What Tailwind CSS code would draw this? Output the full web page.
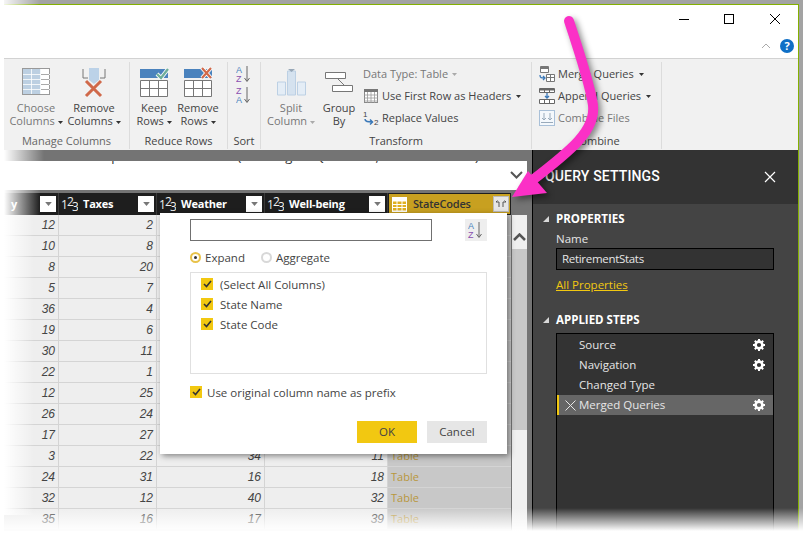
<!DOCTYPE html>
<html lang="en">
<head>
  <meta charset="UTF-8" />
  <title>Query Editor - Expand column</title>
  <script src="https://cdn.jsdelivr.net/npm/@tailwindcss/browser@4"></script>
</head>
<body class="bg-white">
<div class="relative w-[803px] h-[534px] overflow-hidden bg-[#a3a3a3] [font-family:'Open_Sans',sans-serif] text-[11px] text-[#444]">

  <svg class="hidden">
    <symbol id="gear" viewBox="0 0 12 12">
      <circle cx="6" cy="6" r="3.4" fill="none" stroke="#fff" stroke-width="2.6"/>
      <path d="M6 0v12M0 6h12M1.8 1.8l8.4 8.4M10.2 1.8l-8.4 8.4" stroke="#fff" stroke-width="2" stroke-dasharray="2.2 7.6 2.2"/>
    </symbol>
    <symbol id="drop" viewBox="0 0 5 3"><path d="M0 0h5L2.5 3z" fill="currentColor"/></symbol>
  </svg>

  <!-- window -->
  <div class="absolute left-[4px] top-[4px] w-[795px] h-[530px] bg-white border-t border-r border-[#84b000] flex flex-col">

    <!-- title + tabs area -->
    <div class="h-[53px] shrink-0 flex flex-col items-end">
      <div class="flex items-center h-[28px] text-black">
        <svg class="w-[12px] h-[12px] mr-[33px]" viewBox="0 0 12 12"><path d="M1 6.5h10" stroke="#000"/></svg>
        <svg class="w-[12px] h-[12px] mr-[34px]" viewBox="0 0 12 12"><rect x="1.5" y="1.5" width="9" height="9" fill="none" stroke="#000"/></svg>
        <svg class="w-[12px] h-[12px] mr-[17px]" viewBox="0 0 12 12"><path d="M1 1l10 10M11 1L1 11" stroke="#000"/></svg>
      </div>
      <div class="flex items-center mr-[4px] mt-[6px]">
        <svg class="w-[10px] h-[6px] mr-[9px]" viewBox="0 0 10 6"><path d="M1 5l4-4 4 4" fill="none" stroke="#aaa"/></svg>
        <div class="w-[14px] h-[14px] rounded-full bg-[#0f6fc6] text-white text-[11px] font-bold leading-[14px] text-center">?</div>
      </div>
    </div>

    <!-- ribbon -->
    <div class="h-[92px] shrink-0 bg-[#f1f1f1] border-t border-[#d2d2d2] flex pt-[3px] pb-[1px]">

      <div class="w-[126px] border-r border-[#dcdcdc] flex flex-col">
        <div class="flex-1 flex pl-[3px]">
          <div class="w-[58px] flex flex-col items-center text-[#777]">
            <svg class="w-[29px] h-[28px] mt-[6px] mb-[5px]" viewBox="0 0 29 28">
              <rect x=".5" y=".5" width="27" height="26" fill="#fff" stroke="#999"/>
              <rect x="1" y="1" width="18" height="25" fill="#bdd0e2"/>
              <path d="M1 6.5h27M1 11.5h27M1 16.5h27M1 21.5h27M9.5 1v25M18.5 1v25" stroke="#fff" stroke-opacity=".8"/>
              <path d="M19 6.5h8M19 11.5h8M19 16.5h8M19 21.5h8" stroke="#aaa"/>
            </svg>
            <div class="leading-[13px] text-center">Choose<br>Columns <svg class="inline w-[5px] h-[3px] align-middle text-[#333]"><use href="#drop"/></svg></div>
          </div>
          <div class="w-[58px] flex flex-col items-center">
            <svg class="w-[24px] h-[30px] mt-[6px] mb-[3px]" viewBox="0 0 24 30">
              <path d="M1 1v9h5M23 1v9h-5" fill="none" stroke="#777"/>
              <path d="M7 0h10v12l-5 4-5-4z" fill="#bcd2e8"/>
              <path d="M4 13l15 15M19 13L4 28" stroke="#d0694a" stroke-width="3"/>
            </svg>
            <div class="leading-[13px] text-center">Remove<br>Columns <svg class="inline w-[5px] h-[3px] align-middle text-[#333]"><use href="#drop"/></svg></div>
          </div>
        </div>
        <div class="h-[19px] text-center leading-[22px] text-[#666]">Manage Columns</div>
      </div>

      <div class="w-[98px] border-r border-[#dcdcdc] flex flex-col">
        <div class="flex-1 flex pl-[2px]">
          <div class="w-[44px] flex flex-col items-center">
            <svg class="w-[29px] h-[30px] mt-[5px] mb-[4px]" viewBox="0 0 29 30">
              <rect x="0" y="2" width="28" height="9" fill="#4a82bd"/>
              <path d="M17 7l4 4 7-9" fill="none" stroke="#fff" stroke-width="4"/>
              <path d="M17 7l4 4 7-9" fill="none" stroke="#6fae9a" stroke-width="2.4"/>
              <path d="M.5 13.5h27v16H.5zM.5 21.5h27M9.5 13v17M18.5 13v17" fill="#fff" stroke="#777"/>
            </svg>
            <div class="leading-[13px] text-center">Keep<br>Rows <svg class="inline w-[5px] h-[3px] align-middle text-[#333]"><use href="#drop"/></svg></div>
          </div>
          <div class="w-[44px] flex flex-col items-center">
            <svg class="w-[29px] h-[30px] mt-[5px] mb-[4px]" viewBox="0 0 29 30">
              <rect x="0" y="2" width="28" height="9" fill="#4a82bd"/>
              <path d="M18 1l9 10M27 1l-9 10" stroke="#fff" stroke-width="4"/>
              <path d="M18 1l9 10M27 1l-9 10" stroke="#d0694a" stroke-width="2.2"/>
              <path d="M.5 13.5h27v16H.5zM.5 21.5h27M9.5 13v17M18.5 13v17" fill="#fff" stroke="#777"/>
            </svg>
            <div class="leading-[13px] text-center">Remove<br>Rows <svg class="inline w-[5px] h-[3px] align-middle text-[#333]"><use href="#drop"/></svg></div>
          </div>
        </div>
        <div class="h-[19px] text-center leading-[22px]">Reduce Rows</div>
      </div>

      <div class="w-[33px] border-r border-[#dcdcdc] flex flex-col">
        <div class="flex-1 flex flex-col items-center pt-[3px] gap-[3px]">
          <svg class="w-[16px] h-[18px]" viewBox="0 0 16 18">
            <text x="0" y="8" font-size="9" fill="#4a82bd" font-family="Liberation Sans">A</text>
            <text x="0" y="17" font-size="9" fill="#8a4fb0" font-family="Liberation Sans">Z</text>
            <path d="M11 1v15M8.5 13l2.5 3.5 2.5-3.500" fill="none" stroke="#666"/>
          </svg>
          <svg class="w-[16px] h-[18px]" viewBox="0 0 16 18">
            <text x="0" y="8" font-size="9" fill="#8a4fb0" font-family="Liberation Sans">Z</text>
            <text x="0" y="17" font-size="9" fill="#4a82bd" font-family="Liberation Sans">A</text>
            <path d="M11 1v15M8.5 13l2.5 3.5 2.5-3.500" fill="none" stroke="#666"/>
          </svg>
        </div>
        <div class="h-[19px] text-center leading-[22px]">Sort</div>
      </div>

      <div class="w-[271px] border-r border-[#dcdcdc] flex flex-col">
        <div class="flex-1 flex pl-[3px]">
          <div class="w-[54px] flex flex-col items-center text-[#777]">
            <svg class="w-[29px] h-[28px] mt-[6px] mb-[5px]" viewBox="0 0 29 28">
              <path d="M.5 14h8v13h-8zM20.5 14h8v13h-8z" fill="#e4edf6" stroke="#bcd0e4"/>
              <path d="M10.5 3h8v24h-8z" fill="#d5e2ef" stroke="#bcd0e4"/>
              <path d="M11 1h7l-3.500 3z" fill="#98a8b8"/>
            </svg>
            <div class="leading-[13px] text-center">Split<br>Column <svg class="inline w-[5px] h-[3px] align-middle text-[#aaa]"><use href="#drop"/></svg></div>
          </div>
          <div class="w-[42px] flex flex-col items-center">
            <svg class="w-[29px] h-[28px] mt-[6px] mb-[5px]" viewBox="0 0 29 28">
              <path d="M.5 4.500h20v6H.5zM7.500 17.500h20v6h-20z" fill="#fff" stroke="#777"/>
              <path d="M13 11l6 6" stroke="#777"/>
            </svg>
            <div class="leading-[13px] text-center">Group<br>By</div>
          </div>
          <div class="flex flex-col pl-[3px] pt-[3px] gap-[4px]">
            <div class="h-[18px] flex items-center text-[#777]">Data Type: Table <svg class="inline w-[5px] h-[3px] ml-[4px] text-[#aaa]"><use href="#drop"/></svg></div>
            <div class="h-[18px] flex items-center">
              <svg class="w-[14px] h-[14px] mr-[4px] ml-[1px]" viewBox="0 0 14 14">
                <rect x=".5" y=".5" width="13" height="13" fill="#fff" stroke="#888"/>
                <rect x="0" y="0" width="14" height="3" fill="#777"/>
                <path d="M0 6h14M0 9h14M0 12h14M3.500 3v11M7 3v11M10.500 3v11" stroke="#999" stroke-width=".8"/>
              </svg>
              Use First Row as Headers <svg class="inline w-[5px] h-[3px] ml-[5px] text-[#333]"><use href="#drop"/></svg>
            </div>
            <div class="h-[18px] flex items-center">
              <svg class="w-[17px] h-[18px] mr-[2px]" viewBox="0 0 17 18">
                <text x="0" y="8" font-size="8" fill="#444" font-family="Liberation Sans">1</text>
                <text x="11" y="16" font-size="8" fill="#444" font-family="Liberation Sans">2</text>
                <path d="M2 10c0 3 3 3 7 3M7 10.500l2.500 2.500L7 15.500" fill="none" stroke="#3a78b8" stroke-width="1.500"/>
              </svg>
              Replace Values
            </div>
          </div>
        </div>
        <div class="h-[19px] text-center leading-[22px]">Transform</div>
      </div>

      <div class="w-[130px] border-r border-[#dcdcdc] flex flex-col">
        <div class="flex-1 flex flex-col pl-[7px] pt-[3px] gap-[4px]">
          <div class="h-[18px] flex items-center">
            <svg class="w-[16px] h-[16px] mr-[3px]" viewBox="0 0 16 16">
              <path d="M1.500 .5h8v6h-8z" fill="#fff" stroke="#777"/><path d="M1 1h9v2H1z" fill="#777"/>
              <path d="M7.500 8.500h8v7h-8zM7.500 11.500h8M11.500 9v7" fill="#fff" stroke="#777"/>
              <path d="M1 9c0 3 1 3 5 3M4 10l2 2-2 2" fill="none" stroke="#3a78b8" stroke-width="1.300"/>
            </svg>
            Merge Queries <svg class="inline w-[5px] h-[3px] ml-[5px] text-[#333]"><use href="#drop"/></svg>
          </div>
          <div class="h-[18px] flex items-center">
            <svg class="w-[16px] h-[16px] mr-[3px]" viewBox="0 0 16 16">
              <path d="M.5 .5h15v4H.5zM5.500 1v4M10.500 1v4M.5 11.500h15v4H.5zM5.500 11v5M10.500 11v5" fill="#fff" stroke="#666"/>
              <path d="M1 1h14v1.500H1z" fill="#666"/>
              <path d="M8 5v5M6 8l2 2 2-2" fill="none" stroke="#3a78b8" stroke-width="1.300"/>
            </svg>
            Append Queries <svg class="inline w-[5px] h-[3px] ml-[5px] text-[#333]"><use href="#drop"/></svg>
          </div>
          <div class="h-[18px] flex items-center text-[#777]">
            <svg class="w-[16px] h-[16px] mr-[3px]" viewBox="0 0 16 16">
              <rect x=".5" y=".5" width="15" height="15" fill="#f4f8fc" stroke="#a9c0d8"/>
              <path d="M5 3v7M3 8l2 2 2-2M11 3v7M9 8l2 2 2-2M2 12.500h12" fill="none" stroke="#9ab"/>
            </svg>
            Combine Files
          </div>
        </div>
        <div class="h-[19px] text-center leading-[22px]">Combine</div>
      </div>
    </div>

    <!-- body -->
    <div class="flex-1 flex min-h-0 bg-[#747474]">
      <div class="w-[529px] shrink-0 flex flex-col pr-[5px] pt-[11px] border-r border-black">
        <!-- formula bar -->
        <div class="h-[29px] shrink-0 bg-white relative overflow-hidden">
          <div class="absolute left-[36px] top-[-14px] text-[13px] text-[#333] tracking-[1px] whitespace-nowrap">= Table.ExpandTableColumn(#"Merged Queries", "StateCodes")</div>
          <svg class="absolute right-[4px] top-[10px] w-[13px] h-[8px]" viewBox="0 0 13 8"><path d="M1 1l5.500 5.500L12 1" fill="none" stroke="#555" stroke-width="2"/></svg>
        </div>
        <div class="flex flex-1 min-h-0 mt-[3px]">
          <div id="grid" class="w-[507px] shrink-0 [font-family:'Liberation_Sans',sans-serif]"></div>
          <!-- scrollbar -->
          <div class="w-[15px] ml-[1px] mt-[22px] bg-[#f0f0f0] flex flex-col items-center">
            <svg class="w-[13px] h-[8px] mt-[18px] mb-[8px]" viewBox="0 0 13 8"><path d="M1 7l5.500-5.500L12 7" fill="none" stroke="#555" stroke-width="2.500"/></svg>
            <div class="w-[15px] h-[181px] bg-[#c8c8c8]"></div>
          </div>
        </div>
      </div>

      <!-- query settings -->
      <div class="flex-1 bg-[#444] text-[#e6e6e6] text-[11.5px] flex flex-col">
        <div class="h-[54px] shrink-0 bg-[#333] flex items-center justify-between pl-[12px] pr-[22px]">
          <div class="text-white text-[14px] font-medium tracking-[.15px] [font-family:Roboto,sans-serif] pb-[2px]">QUERY SETTINGS</div>
          <svg class="w-[12px] h-[12px]" viewBox="0 0 12 12"><path d="M1 1l10 10M11 1L1 11" stroke="#fff" stroke-width="1.200"/></svg>
        </div>
        <div class="flex flex-col pl-[10px] pr-[24px] flex-1 min-h-0">
          <div class="flex items-center h-[18px] mt-[6px] text-white font-bold">
            <svg class="w-[6px] h-[6px] mr-[7px]" viewBox="0 0 6 6"><path d="M6 0v6H0z" fill="#d8d8d8"/></svg>PROPERTIES
          </div>
          <div class="ml-[13px] mt-[2px] leading-[17px]">Name</div>
          <div class="ml-[13px] mt-[1px] h-[22px] bg-[#333] border border-black px-[5px] leading-[20px] tracking-[-.3px]">RetirementStats</div>
          <div class="ml-[13px] mt-[6px] text-[#f2c811] underline leading-[17px]">All Properties</div>
          <div class="flex items-center h-[18px] mt-[18px] text-white font-bold">
            <svg class="w-[6px] h-[6px] mr-[7px]" viewBox="0 0 6 6"><path d="M6 0v6H0z" fill="#d8d8d8"/></svg>APPLIED STEPS
          </div>
          <div class="ml-[13px] mt-[4px] flex-1 bg-[#333] border border-black pt-[1px]">
            <div class="h-[20px] flex items-center justify-between pl-[22px] pr-[8px]">Source <svg class="w-[12px] h-[12px]"><use href="#gear"/></svg></div>
            <div class="h-[20px] flex items-center justify-between pl-[22px] pr-[8px]">Navigation <svg class="w-[12px] h-[12px]"><use href="#gear"/></svg></div>
            <div class="h-[20px] flex items-center pl-[22px] pr-[8px]">Changed Type</div>
            <div class="h-[20px] flex items-center justify-between bg-[#666] border-l-2 border-[#f2c811] pl-[6px] pr-[8px]">
              <span class="flex items-center">
                <svg class="w-[11px] h-[11px] mr-[3px]" viewBox="0 0 11 11"><path d="M.5.500l10 10M10.500.500l-10 10" stroke="#e6e6e6"/></svg>Merged Queries
              </span>
              <svg class="w-[12px] h-[12px]"><use href="#gear"/></svg>
            </div>
          </div>
        </div>
      </div>
    </div>
  </div>

  <!-- expand dialog -->
  <div class="absolute left-[160px] top-[213px] w-[347px] h-[241px] bg-white shadow-[2px_2px_6px_rgba(0,0,0,0.45)] text-[11.5px] text-[#444] pt-[6px] pl-[30px] pr-[20px]">
    <div class="flex justify-between">
      <div class="w-[242px] h-[22px] border border-[#707070]"></div>
      <div class="w-[22px] h-[22px] bg-[#eee] flex items-center justify-center">
        <svg class="w-[16px] h-[18px]" viewBox="0 0 16 18">
          <text x="0" y="8" font-size="9" fill="#4a82bd" font-family="Liberation Sans">A</text>
          <text x="0" y="17" font-size="9" fill="#8a4fb0" font-family="Liberation Sans">Z</text>
          <path d="M11 1v15M8.500 13l2.500 3.500 2.500-3.500" fill="none" stroke="#666"/>
        </svg>
      </div>
    </div>
    <div class="flex items-center h-[17px] mt-[8px]">
      <span class="w-[11px] h-[11px] rounded-full border-2 border-[#e8c24a] flex items-center justify-center mr-[4px]"><span class="w-[3px] h-[3px] rounded-full bg-[#333]"></span></span>
      <span class="mr-[16px]">Expand</span>
      <span class="w-[11px] h-[11px] rounded-full border-2 border-[#d8d8d8] mr-[4px]"></span>
      <span>Aggregate</span>
    </div>
    <div class="h-[102px] mt-[6px] border border-[#e0e0e0] pl-[10px] pt-[5px] flex flex-col gap-[8px]">
      <label class="flex items-center h-[12px] gap-[7px]"><span class="w-[12px] h-[12px] bg-[#f2c811] flex items-center justify-center"><svg class="w-[9px] h-[8px]" viewBox="0 0 9 8"><path d="M1 4l2.500 2.500L8 1" fill="none" stroke="#333" stroke-width="1.600"/></svg></span><span class="pt-[2px]">(Select All Columns)</span></label>
      <label class="flex items-center h-[12px] gap-[7px]"><span class="w-[12px] h-[12px] bg-[#f2c811] flex items-center justify-center"><svg class="w-[9px] h-[8px]" viewBox="0 0 9 8"><path d="M1 4l2.500 2.500L8 1" fill="none" stroke="#333" stroke-width="1.600"/></svg></span><span class="pt-[2px]">State Name</span></label>
      <label class="flex items-center h-[12px] gap-[7px]"><span class="w-[12px] h-[12px] bg-[#f2c811] flex items-center justify-center"><svg class="w-[9px] h-[8px]" viewBox="0 0 9 8"><path d="M1 4l2.500 2.500L8 1" fill="none" stroke="#333" stroke-width="1.600"/></svg></span><span class="pt-[2px]">State Code</span></label>
    </div>
    <label class="flex items-center h-[12px] mt-[12px] gap-[5px]"><span class="w-[12px] h-[12px] bg-[#f2c811] flex items-center justify-center"><svg class="w-[9px] h-[8px]" viewBox="0 0 9 8"><path d="M1 4l2.500 2.500L8 1" fill="none" stroke="#333" stroke-width="1.600"/></svg></span><span class="pt-[2px]">Use original column name as prefix</span></label>
    <div class="flex justify-end gap-[10px] mt-[23px]">
      <div class="w-[60px] h-[22px] bg-[#f2c811] text-center leading-[22px]">OK</div>
      <div class="w-[60px] h-[22px] bg-[#e6e6e6] text-center leading-[22px]">Cancel</div>
    </div>
  </div>

  <!-- fades at the screenshot edges -->
  <div class="absolute left-0 top-0 w-[40px] h-[5px] bg-gradient-to-r from-white to-transparent"></div>
  <div class="absolute left-[4px] top-[150px] w-[40px] h-[11px] bg-gradient-to-r from-white to-transparent"></div>
  <div class="absolute left-[4px] top-[190px] w-[36px] h-[25px] bg-gradient-to-r from-white to-transparent"></div>
  <div class="absolute left-[4px] top-[215px] w-[30px] h-[300px] bg-gradient-to-r from-white to-transparent"></div>
  <div class="absolute left-0 top-0 w-[4px] h-[534px] bg-white"></div>
  <div class="absolute left-0 top-[508px] w-[803px] h-[23px] bg-gradient-to-b from-transparent to-white"></div>
  <div class="absolute left-0 top-[531px] w-[803px] h-[3px] bg-white"></div>

  <!-- pink arrow -->
  <svg class="absolute left-0 top-0 w-[803px] h-[534px] drop-shadow-[3px_3px_3px_rgba(0,0,0,0.45)]" viewBox="0 0 803 534">
    <path d="M569 21C578 48 590 85 593 105C596 130 572 150 530 182" fill="none" stroke="#fb30c6" stroke-width="10" stroke-linecap="round"/>
    <path d="M512 197L528 171L547 193z" fill="#fb30c6"/>
  </svg>
</div>

<script>
  const col1 = [12,10,8,5,36,19,30,22,12,26,17,3,24,32,35];
  const col2 = [2,8,20,7,4,6,11,1,25,24,27,22,31,12,16];
  // rows 1-11 of these columns sit behind the dialog
  const col3 = ["","","","","","","","","","","",34,16,40,17];
  const col4 = ["","","","","","","","","","","",11,18,32,39];

  const typeIcon = `<svg class="w-[17px] h-[16px] shrink-0" viewBox="0 0 17 16" font-family="Open Sans" fill="#eee" font-size="12"><text x="0" y="13">1</text><text x="6" y="10">2</text><text x="11" y="15">3</text></svg>`;
  const filterBtn = `<span class="w-[16px] h-[16px] shrink-0 bg-white flex items-center justify-center"><svg class="w-[7px] h-[4px] text-[#777]"><use href="#drop"/></svg></span>`;

  const head = (title, w, icon = true) => `
    <div class="${w} h-full flex items-center border-r border-[#3a3a3a] pl-[2px] pr-[2px]">
      ${icon ? typeIcon : ""}
      <span class="flex-1 pl-[5px] text-white font-bold text-[11px] tracking-[-.2px] [font-family:'Open_Sans',sans-serif]">${title}</span>
      ${filterBtn}
    </div>`;

  const cell = (v, w) => `<div class="${w} h-full border-r border-[#d4d4d4] text-right pr-[3px] italic text-[12px] leading-[20px] text-[#444]">${v}</div>`;

  let rows = "";
  col1.forEach((v, i) => {
    rows += `<div class="flex h-[21px] border-b border-[#d4d4d4] bg-[#eee]">
      ${cell(v, "w-[55px]")}${cell(col2[i], "w-[98px]")}${cell(col3[i], "w-[108px]")}${cell(col4[i], "w-[123px]")}
      <div class="flex-1 h-full bg-[#c8c8c8] pl-[3px] text-[11px] leading-[20px] text-[#b8973c] [font-family:'Open_Sans',sans-serif]">${i > 10 ? "Table" : ""}</div>
    </div>`;
  });

  document.getElementById("grid").innerHTML = `
    <div class="flex h-[22px] bg-[#1e1e1e]">
      ${head("y", "w-[55px]", false)}${head("Taxes", "w-[98px]")}${head("Weather", "w-[108px]")}${head("Well-being", "w-[123px]")}
      <div class="flex-1 h-full bg-[#c8a020] border border-[#1e1e1e] flex items-center pl-[3px] pr-[1px] text-[#333] text-[11px] font-semibold tracking-[-.2px] [font-family:'Open_Sans',sans-serif]">
        <svg class="w-[15px] h-[15px] shrink-0" viewBox="0 0 15 15"><rect width="15" height="15" fill="#fff"/><path d="M1 4.500h13v9H1z" fill="#e0b020"/><path d="M0 7.500h15M0 10.500h15M5 4v11M10 4v11" stroke="#fff"/></svg>
        <span class="flex-1 pl-[6px]">StateCodes</span>
        <span class="w-[16px] h-[16px] bg-[#e6e6e6] border border-[#bbb] flex items-center justify-center">
          <svg class="w-[12px] h-[8px]" viewBox="0 0 12 8"><path d="M4 7V2H1l1.500-1.500M8 7V2h3L9.500.5" fill="none" stroke="#555"/></svg>
        </span>
      </div>
    </div>` + rows;
</script>
</body>
</html>
